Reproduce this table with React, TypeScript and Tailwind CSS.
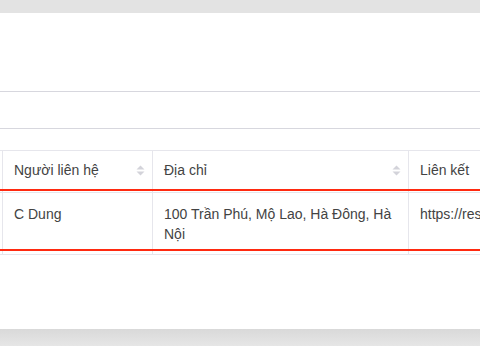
import React from 'react'

type Column = {
  key: string
  title: string
  width: string
  sortable?: boolean
}

const columns: Column[] = [
  { key: 'stub', title: '', width: 'w-[3px]' },
  { key: 'contact', title: 'Người liên hệ', width: 'w-[150px]', sortable: true },
  { key: 'address', title: 'Địa chỉ', width: 'w-[256px]', sortable: true },
  { key: 'link', title: 'Liên kết', width: 'w-[220px]' },
]

const row: Record<string, string> = {
  stub: '',
  contact: 'C Dung',
  address: '100 Trần Phú, Mộ Lao, Hà Đông, Hà Nội',
  link: 'https://restaurant.example.vn',
}

function SortCaret() {
  return (
    <svg width="9" height="11" viewBox="0 0 9 11" className="shrink-0">
      <path d="M0.5 4.5 L4.5 0.5 L8.5 4.5 Z" fill="#d3d3da" />
      <path d="M0.5 6.5 L8.5 6.5 L4.5 10.5 Z" fill="#d3d3da" />
    </svg>
  )
}

export default function App() {
  return (
    <div className="w-[480px] h-[346px] flex flex-col bg-white overflow-hidden font-['Liberation_Sans','Helvetica_Neue',Arial,sans-serif] text-[14px] text-[#434343]">
      {/* window chrome strip */}
      <div className="h-[13px] shrink-0 bg-[#e3e3e3]" />

      <div className="flex-1 flex flex-col">
        <div className="h-[79px] shrink-0 border-b border-[#d7d7de]" />
        <div className="h-[37px] shrink-0 border-b border-[#d7d7de]" />
        <div className="h-[21px] shrink-0" />

        {/* table, scrolled a little to the right */}
        <div className="overflow-hidden">
          <div className="flex w-max">
            {columns.map((col) => (
              <div
                key={col.key}
                className={`${col.width} h-[39px] shrink-0 flex items-center justify-between border-t border-r border-[#e6e6ec] ${col.key === 'stub' ? '' : 'pl-[11px] pr-[7px]'} overflow-hidden whitespace-nowrap`}
              >
                <span className="leading-5">{col.title}</span>
                {col.sortable && <SortCaret />}
              </div>
            ))}
          </div>

          <div className="relative flex w-max">
            {columns.map((col) => (
              <div
                key={col.key}
                className={`${col.width} h-[66px] shrink-0 border-r border-b border-[#e6e6ec] ${col.key === 'stub' ? '' : 'px-[11px] pt-[15px]'} leading-5 overflow-hidden ${col.key === 'link' ? 'whitespace-nowrap' : ''}`}
              >
                {row[col.key]}
              </div>
            ))}
            <div className="absolute left-0 right-0 top-[3px] h-px bg-[#e6e6ec]" />
            {/* selected row outline */}
            <div className="absolute left-0 right-0 top-0 h-[2px] bg-[#ff2a10]" />
            <div className="absolute left-0 right-0 top-[60px] h-[2px] bg-[#ff2a10]" />
          </div>
        </div>
      </div>

      <div className="h-[17px] shrink-0 bg-gradient-to-b from-[#d9d9d9] to-[#e6e6e6]" />
    </div>
  )
}
